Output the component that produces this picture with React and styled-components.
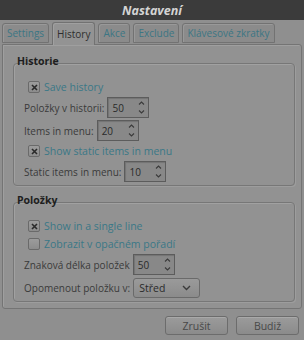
import styled, { createGlobalStyle } from "styled-components";

const GlobalStyle = createGlobalStyle`
  html, body {
    margin: 0;
    padding: 0;
    background: #8f8f8f;
  }
  body {
    font-family: "Open Sans", "DejaVu Sans", sans-serif;
    font-size: 10px;
  }
`;

const tabs = ["Settings", "History", "Akce", "Exclude", "Klávesové zkratky"];

function App() {
  return (
    <Dialog>
      <GlobalStyle />
      <TitleBar>Nastavení</TitleBar>
      <TabBar>
        {tabs.map((t) => (
          <Tab key={t} $active={t === "History"}>
            {t}
          </Tab>
        ))}
      </TabBar>
      <Panel>
        <Group>
          <GroupTitle>Historie</GroupTitle>
          <GroupBox>
            <CheckRow checked>Save history</CheckRow>
            <SpinRow label="Položky v historii:" value="50" />
            <SpinRow label="Items in menu:" value="20" />
            <CheckRow checked>Show static items in menu</CheckRow>
            <SpinRow label="Static items in menu:" value="10" />
          </GroupBox>
        </Group>
        <Group>
          <GroupTitle>Položky</GroupTitle>
          <GroupBox>
            <CheckRow checked>Show in a single line</CheckRow>
            <CheckRow>Zobrazit v opačném pořadí</CheckRow>
            <SpinRow label="Znaková délka položek" value="50" />
            <Row>
              <Label>Opomenout položku v:</Label>
              <Combo>
                Střed
                <svg width="9" height="6" viewBox="0 0 9 6">
                  <path d="M1 1l3.5 3.5L8 1" fill="none" stroke="#3a3a3a" strokeWidth="1.4" />
                </svg>
              </Combo>
            </Row>
          </GroupBox>
        </Group>
      </Panel>
      <Buttons>
        <Button>Zrušit</Button>
        <Button>Budiž</Button>
      </Buttons>
    </Dialog>
  );
}

function CheckRow({ checked, children }) {
  return (
    <CheckLine>
      <Box>
        {checked && (
          <svg width="7" height="7" viewBox="0 0 7 7">
            <path d="M1 1l5 5M6 1l-5 5" stroke="#2a2a2a" strokeWidth="1.6" />
          </svg>
        )}
      </Box>
      <CheckText>{children}</CheckText>
    </CheckLine>
  );
}

function SpinRow({ label, value }) {
  return (
    <Row>
      <Label>{label}</Label>
      <Spin>
        {value}
        <Arrows>
          <svg width="7" height="4" viewBox="0 0 7 4">
            <path d="M1 3.5L3.5 1L6 3.5" fill="none" stroke="#3a3a3a" strokeWidth="1.1" />
          </svg>
          <svg width="7" height="4" viewBox="0 0 7 4">
            <path d="M1 0.5L3.5 3L6 0.5" fill="none" stroke="#3a3a3a" strokeWidth="1.1" />
          </svg>
        </Arrows>
      </Spin>
    </Row>
  );
}

const Dialog = styled.div`
  width: 304px;
  height: 340px;
  display: flex;
  flex-direction: column;
  background: #8f8f8f;
  overflow: hidden;
`;

const TitleBar = styled.div`
  height: 20px;
  background: #3b3b3b;
  color: #d4d4d4;
  font-style: italic;
  font-weight: bold;
  font-size: 12.5px;
  display: flex;
  align-items: center;
  justify-content: center;
`;

const TabBar = styled.div`
  display: flex;
  align-items: flex-end;
  gap: 3px;
  padding: 3px 0 0 2px;
  height: 21px;
  position: relative;
  z-index: 1;
`;

const Tab = styled.div`
  height: ${(p) => (p.$active ? "22px" : "18px")};
  margin-bottom: ${(p) => (p.$active ? "-1px" : "1px")};
  padding: 0 4px;
  display: flex;
  align-items: center;
  border: 1px solid #727272;
  border-bottom: ${(p) => (p.$active ? "none" : "1px solid #727272")};
  border-radius: 3px 3px 0 0;
  background: ${(p) => (p.$active ? "#939393" : "#8b8b8b")};
  color: ${(p) => (p.$active ? "#2e2e2e" : "#3c7684")};
  font-size: 10px;
  box-shadow: inset 1px 1px 0 rgba(255, 255, 255, 0.12);
`;

const Panel = styled.div`
  margin: 0 2px;
  height: 265px;
  box-sizing: border-box;
  border: 1px solid #747474;
  border-radius: 0 3px 3px 3px;
  background: #929292;
  box-shadow: inset 1px 1px 0 rgba(255, 255, 255, 0.12);
  padding: 10px 6px 4px 10px;
  display: flex;
  flex-direction: column;
  gap: 8px;
`;

const Group = styled.div`
  display: flex;
  flex-direction: column;
`;

const GroupTitle = styled.div`
  font-weight: bold;
  color: #1e1e1e;
  font-size: 10.5px;
  line-height: 12px;
  padding-left: 4px;
  margin-bottom: -4px;
  position: relative;
`;

const GroupBox = styled.div`
  border: 1px solid #777;
  border-radius: 4px;
  box-shadow: inset 1px 1px 0 rgba(255, 255, 255, 0.14), 1px 1px 0 rgba(255, 255, 255, 0.1);
  padding: 15px 8px 3px 10px;
  display: flex;
  flex-direction: column;
  gap: 2px;
`;

const Row = styled.div`
  display: flex;
  align-items: center;
  gap: 3px;
  height: 21px;
  color: #3a3a3a;
`;

const Label = styled.span`
  white-space: nowrap;
`;

const CheckLine = styled.div`
  display: flex;
  align-items: center;
  gap: 4px;
  height: 16px;
  padding-left: 4px;
`;

const Box = styled.span`
  width: 10px;
  height: 10px;
  border: 1px solid #6a6a6a;
  border-radius: 2px;
  background: linear-gradient(#9c9c9c, #8c8c8c);
  display: flex;
  align-items: center;
  justify-content: center;
`;

const CheckText = styled.span`
  color: #3a7887;
  font-size: 10.5px;
`;

const Spin = styled.div`
  width: 42px;
  height: 21px;
  box-sizing: border-box;
  border: 1px solid #5c5c5c;
  background: #888;
  box-shadow: inset 1px 1px 1px rgba(0, 0, 0, 0.15);
  display: flex;
  align-items: center;
  justify-content: space-between;
  padding: 0 3px 0 4px;
  color: #2a2a2a;
`;

const Arrows = styled.div`
  display: flex;
  flex-direction: column;
  gap: 5px;
`;

const Combo = styled.div`
  width: 67px;
  height: 20px;
  box-sizing: border-box;
  border: 1px solid #6a6a6a;
  border-radius: 3px;
  background: linear-gradient(#9a9a9a, #8b8b8b);
  display: flex;
  align-items: center;
  justify-content: space-between;
  padding: 0 8px 0 5px;
  color: #2a2a2a;
  font-size: 10.5px;
`;

const Buttons = styled.div`
  display: flex;
  justify-content: flex-end;
  gap: 8px;
  padding: 7px 5px 0 0;
`;

const Button = styled.div`
  width: 63px;
  height: 19px;
  box-sizing: border-box;
  border: 1px solid #6c6c6c;
  border-radius: 3px;
  background: linear-gradient(#9b9b9b, #8b8b8b);
  box-shadow: inset 0 1px 0 rgba(255, 255, 255, 0.15);
  color: #484848;
  font-size: 10.5px;
  display: flex;
  align-items: center;
  justify-content: center;
`;

export default App;
